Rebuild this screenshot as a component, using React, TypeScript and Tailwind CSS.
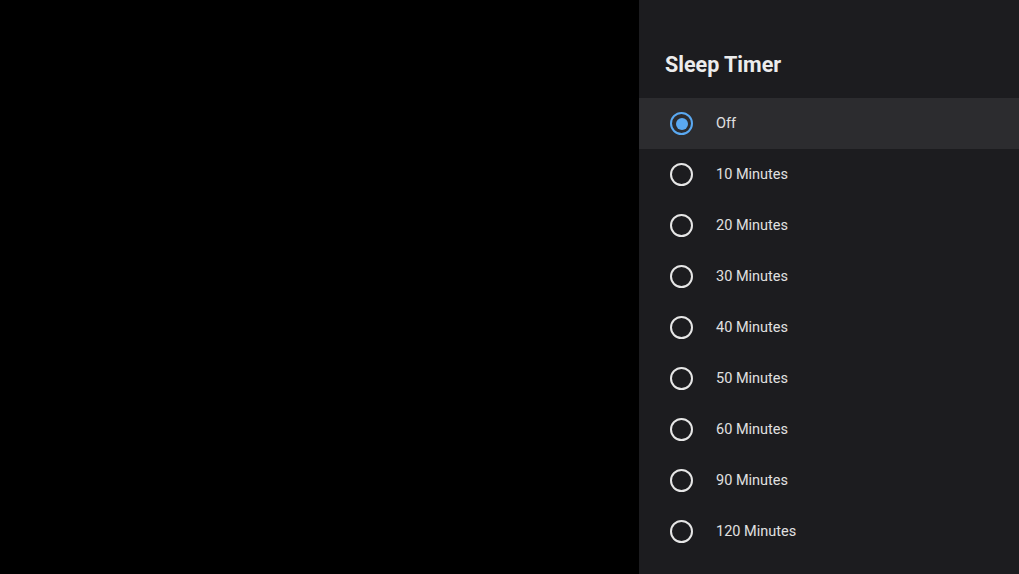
import React from "react";

const options = ["Off", "10 Minutes", "20 Minutes", "30 Minutes", "40 Minutes", "50 Minutes", "60 Minutes", "90 Minutes", "120 Minutes"];

export default function App() {
  return (
    <div className="flex w-[1019px] h-[574px] bg-black overflow-hidden" style={{ fontFamily: "Roboto, 'Noto Sans', sans-serif" }}>
      <div className="flex-1 bg-black" />
      <div className="w-[380px] h-full bg-[#1c1c1f] flex flex-col">
        <div className="h-[98px] flex items-center pl-[26px] pt-[32px]">
          <span className="text-[21.5px] font-bold text-[#ececec]">Sleep Timer</span>
        </div>
        {options.map((o, i) => (
          <div key={o} className={`h-[51px] flex items-center pl-[31px] ${i === 0 ? "bg-[#2c2c2f]" : ""}`}>
            {i === 0 ? (
              <div className="w-[23px] h-[23px] rounded-full border-2 border-[#5aa9f2] flex items-center justify-center">
                <div className="w-[12px] h-[12px] rounded-full bg-[#5aa9f2]" />
              </div>
            ) : (
              <div className="w-[23px] h-[23px] rounded-full border-2 border-[#e6e6e6]" />
            )}
            <span className="ml-[23px] text-[14.5px] text-[#e0e0e0]">{o}</span>
          </div>
        ))}
      </div>
    </div>
  );
}
